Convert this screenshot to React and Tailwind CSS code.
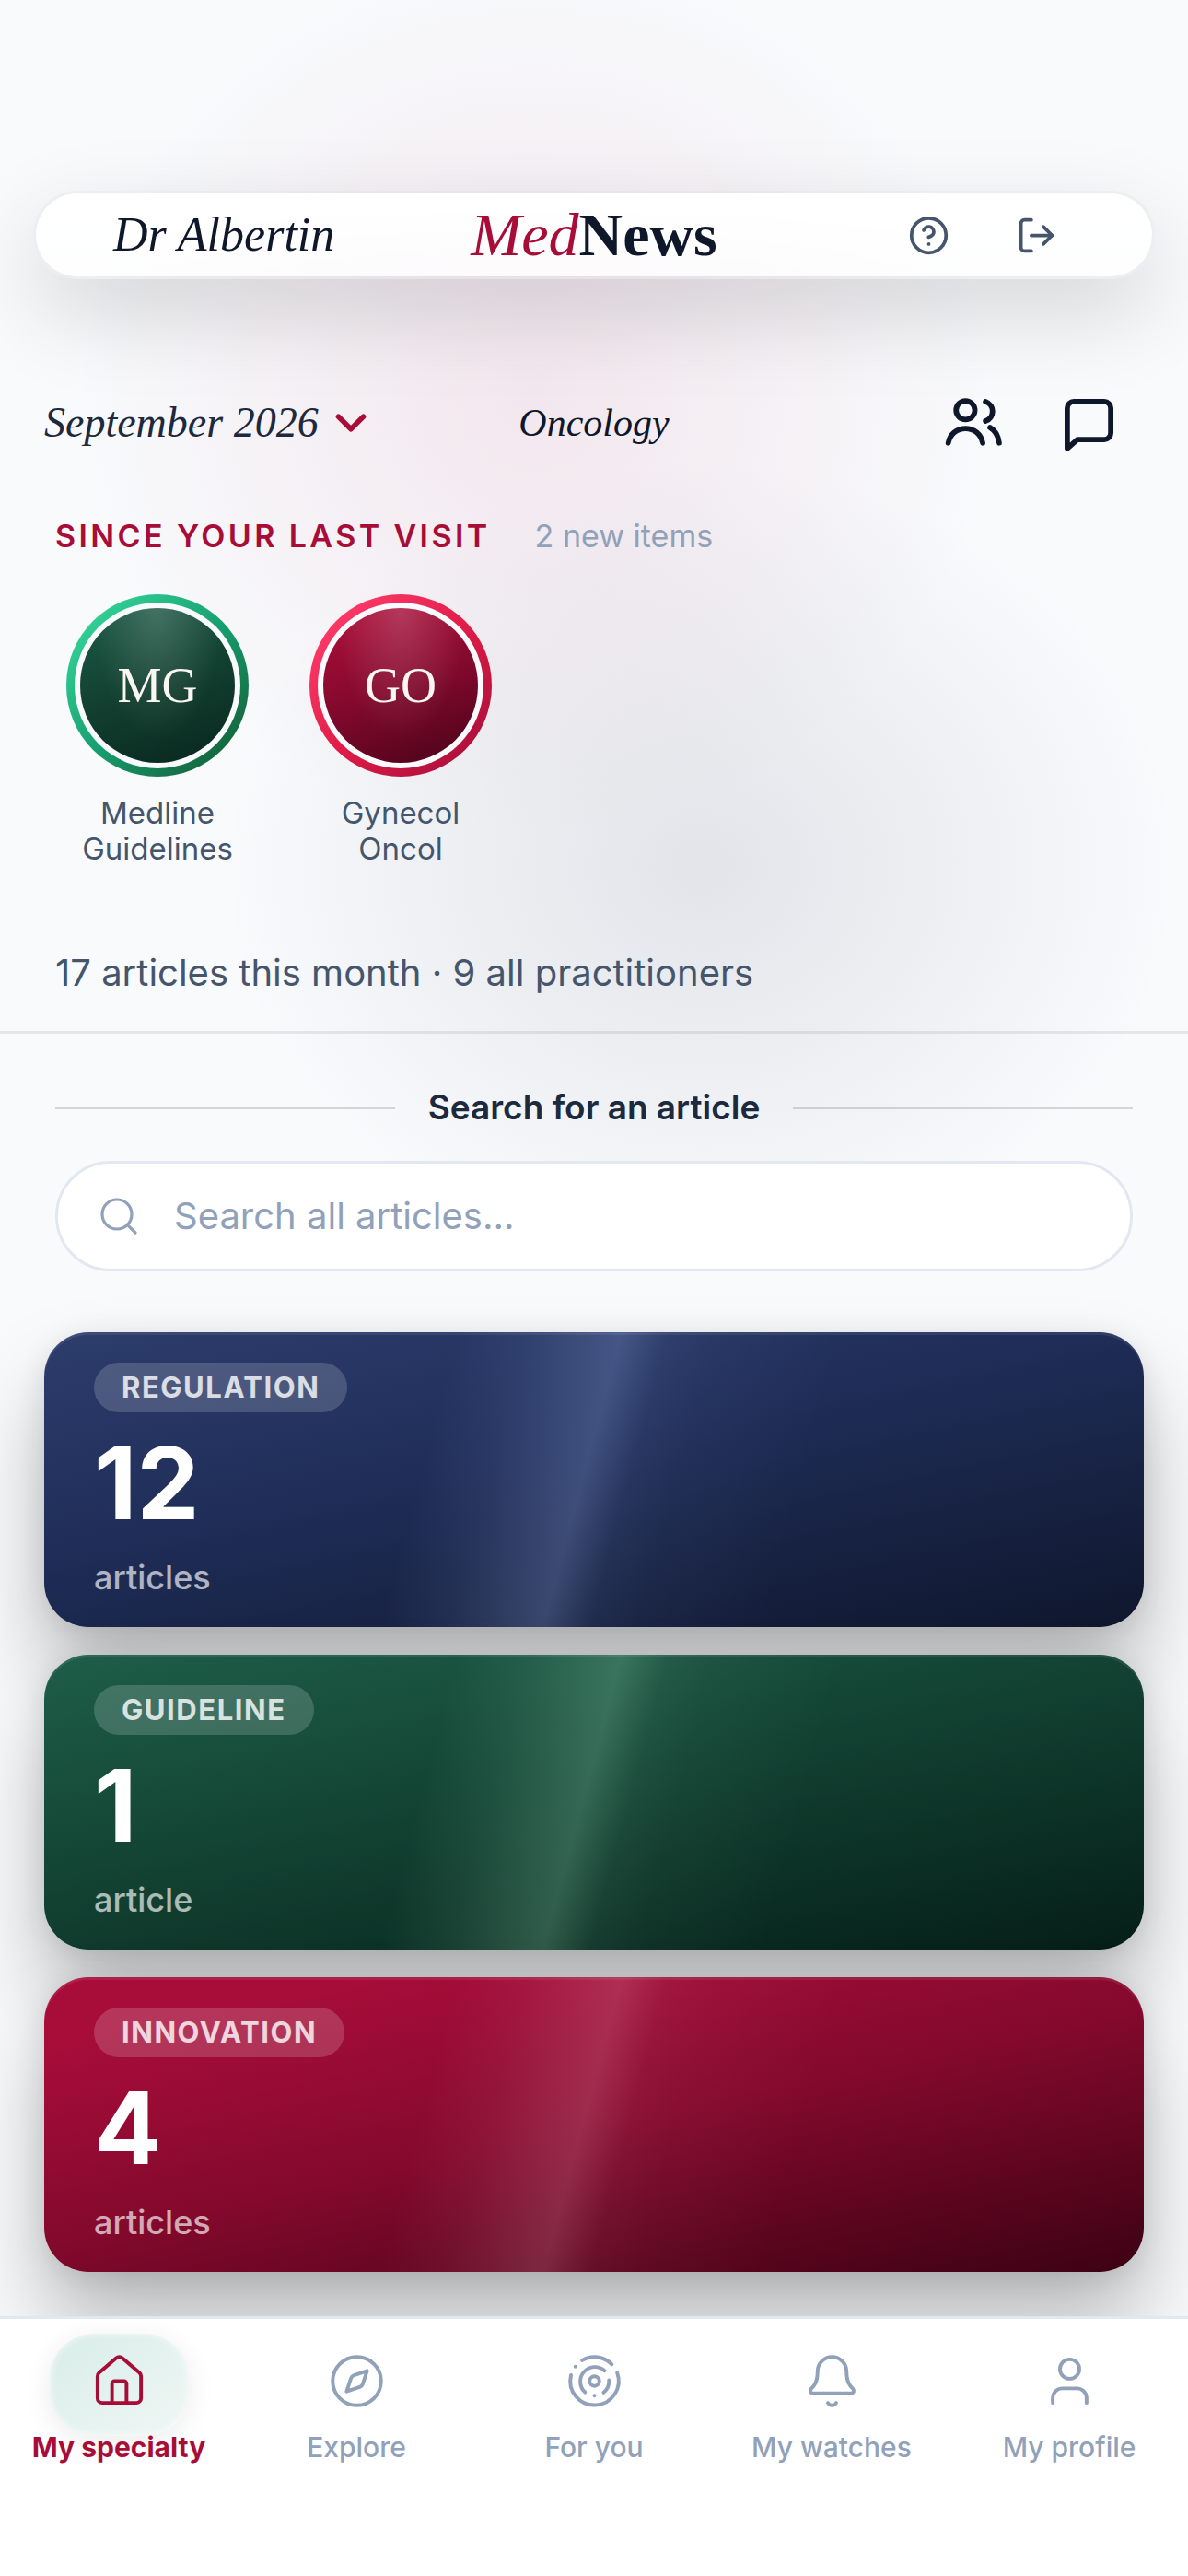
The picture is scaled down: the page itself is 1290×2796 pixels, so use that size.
import React, { useState } from 'react';
import { Bell, ChevronDown, CircleHelp, Compass, House, LogOut, Search, User } from 'lucide-react';

const RadarIcon = ({ className }) => (
  <svg className={className} viewBox="0 0 24 24" fill="none" stroke="currentColor" strokeWidth="1.5" strokeLinecap="round" aria-hidden="true">
    <circle cx="12" cy="12" r="2" />
    <path d="M8.1 16.6A6 6 0 0 1 16.2 7.7" />
    <path d="M18 11.6A6 6 0 0 1 15.8 16.7" />
    <path d="M2.3 9.5A10 10 0 1 0 21.4 8.5" />
    <path d="M6.9 3.4A10 10 0 0 1 19.2 5.1" />
    <path d="M4.1 6h.01M12 18h.01" />
  </svg>
);

const PeopleIcon = ({ className }) => (
  <svg className={className} viewBox="0 0 24 24" fill="none" stroke="currentColor" strokeWidth="2.1" strokeLinecap="round" strokeLinejoin="round" aria-hidden="true">
    <circle cx="8.5" cy="7" r="3.7" />
    <path d="M1.7 19.9c.7-3.500 3.400-5.700 6.800-5.700s6.100 2.200 6.800 5.700" />
    <path d="M16.4 3.600c3.700 1.300 3.700 6.400 0 7.700" />
    <path d="M18.2 13.800c2 1.200 3.300 3.400 3.600 6.100" />
  </svg>
);

const MessageIcon = ({ className }) => (
  <svg className={className} viewBox="0 0 24 24" fill="none" stroke="currentColor" strokeWidth="2.2" strokeLinecap="round" strokeLinejoin="round" aria-hidden="true">
    <path d="M3 5.7A2.7 2.7 0 0 1 5.7 3h12.6A2.7 2.7 0 0 1 21 5.7v10.3a2.7 2.7 0 0 1-2.7 2.7H7.2L3 22.4z" />
  </svg>
);

const stories = [
  {
    initials: 'MG',
    lines: ['Medline', 'Guidelines'],
    ring: 'bg-[linear-gradient(135deg,#34d399_10%,#17a070_50%,#14532d_100%)]',
    disc: 'bg-[linear-gradient(160deg,#1a5542_10%,#123f30_50%,#08261d_100%)]',
  },
  {
    initials: 'GO',
    lines: ['Gynecol', 'Oncol'],
    ring: 'bg-[linear-gradient(135deg,#ff3b6b_10%,#e11d48_50%,#9f0c37_100%)]',
    disc: 'bg-[linear-gradient(160deg,#a80d38_10%,#83092d_50%,#4a0319_100%)]',
  },
];

const categories = [
  {
    label: 'Regulation',
    count: 12,
    surface: 'bg-[linear-gradient(168deg,#2d3d6c_0%,#1f2d58_42%,#0f172d_100%)]',
    sheen:
      'bg-[linear-gradient(105deg,transparent_35%,rgba(170,195,255,0.08)_41%,rgba(170,195,255,0.24)_49%,rgba(170,195,255,0.08)_53%,rgba(170,195,255,0.04)_57%,transparent_68%)]',
  },
  {
    label: 'Guideline',
    count: 1,
    surface: 'bg-[linear-gradient(168deg,#1e5e49_0%,#134434_42%,#051e17_100%)]',
    sheen:
      'bg-[linear-gradient(105deg,transparent_35%,rgba(170,240,205,0.08)_41%,rgba(170,240,205,0.23)_49%,rgba(170,240,205,0.08)_53%,rgba(170,240,205,0.04)_57%,transparent_68%)]',
  },
  {
    label: 'Innovation',
    count: 4,
    surface: 'bg-[linear-gradient(168deg,#a80d3a_12%,#84092d_50%,#3c0213_100%)]',
    sheen:
      'bg-[linear-gradient(105deg,transparent_35%,rgba(255,190,210,0.06)_41%,rgba(255,190,210,0.19)_49%,rgba(255,190,210,0.06)_53%,rgba(255,190,210,0.03)_57%,transparent_68%)]',
  },
];

const tabs = [
  { label: 'My specialty', icon: House },
  { label: 'Explore', icon: Compass },
  { label: 'For you', icon: RadarIcon },
  { label: 'My watches', icon: Bell },
  { label: 'My profile', icon: User },
];

const Story = ({ story }) => (
  <li>
    <button type="button" className="flex w-[222px] flex-col items-center">
      <span className={`size-[198px] rounded-full p-[9px] ${story.ring}`}>
        <span className="block size-full rounded-full bg-[#f8fafc] p-[6px]">
          <span className={`block size-full overflow-hidden rounded-full ${story.disc}`}>
            <span className="flex size-full items-center justify-center bg-[radial-gradient(ellipse_at_50%_0%,rgba(255,255,255,0.18),transparent_60%)] font-['Liberation_Serif',serif] text-[54px] text-[#faf7f2]">
              {story.initials}
            </span>
          </span>
        </span>
      </span>
      <span className="mt-5 text-center text-[33px] leading-[39px] text-slate-600">
        {story.lines[0]}
        <br />
        {story.lines[1]}
      </span>
    </button>
  </li>
);

const CategoryCard = ({ category }) => (
  <button
    type="button"
    className={`w-full overflow-hidden rounded-[48px] text-left shadow-[0_60px_96px_rgba(0,0,0,0.26),0_6px_30px_rgba(0,0,0,0.1)] ${category.surface}`}
  >
    <span className={`flex flex-col items-start rounded-[48px] px-[54px] pt-[33px] pb-[30px] shadow-[inset_0_3px_0_rgba(255,255,255,0.08)] ${category.sheen}`}>
      <span className="flex h-[54px] items-center rounded-full bg-white/17 px-[30px] text-[31px] font-bold tracking-wider text-white/80 uppercase">
        {category.label}
      </span>
      <span className="mt-[26px] text-[108px] leading-[102px] font-bold text-white">{category.count}</span>
      <span className="mt-[27px] text-[36px] leading-[48px] font-medium text-white/65">
        {category.count === 1 ? 'article' : 'articles'}
      </span>
    </span>
  </button>
);

export default function App() {
  const [activeTab, setActiveTab] = useState('My specialty');
  const [query, setQuery] = useState('');

  return (
    <div className="flex min-h-screen flex-col bg-[#f8fafc] bg-[radial-gradient(ellipse_500px_480px_at_45%_430px,rgba(190,60,110,0.10),rgba(190,60,110,0.05)_50%,transparent),radial-gradient(ellipse_520px_440px_at_59%_940px,rgba(25,35,65,0.10),rgba(25,35,65,0.05)_50%,transparent)] bg-no-repeat font-[Inter,sans-serif]">
      <header className="mx-9 mt-[207px] grid h-24 grid-cols-[1fr_auto_1fr] items-center rounded-full border-[3px] border-slate-900/5 bg-linear-to-b from-white to-white/75 bg-clip-padding px-[84px] font-['Liberation_Serif',serif] text-slate-900 shadow-[0_36px_96px_rgba(0,0,0,0.15)]">
        <span className="text-[52px] leading-[72px] italic">Dr Albertin</span>
        <h1 className="text-[66px] leading-[72px] font-bold">
          <span className="font-normal text-[#a80d38] italic">Med</span>News
        </h1>
        <div className="flex justify-end gap-[33px] text-slate-600">
          <button type="button" aria-label="Help" className="flex size-[84px] items-center justify-center">
            <CircleHelp className="size-[45px]" strokeWidth={2} />
          </button>
          <button type="button" aria-label="Log out" className="flex size-[84px] items-center justify-center">
            <LogOut className="size-[45px]" strokeWidth={2} />
          </button>
        </div>
      </header>

      <main className="flex-1">
        <div className="mt-[123px] grid grid-cols-[1fr_auto_1fr] items-center px-12">
          <button type="button" className="flex items-center gap-2 font-['Liberation_Serif',serif] text-[46px] leading-[66px] text-slate-800 italic">
            September 2026
            <ChevronDown className="size-[54px] text-[#a80d38]" strokeWidth={2.5} />
          </button>
          <h2 className="font-['Liberation_Serif',serif] text-[42px] leading-[66px] text-slate-900 italic">Oncology</h2>
          <div className="flex items-center justify-end gap-[60px] pr-7 text-slate-900">
            <button type="button" aria-label="Colleagues">
              <PeopleIcon className="size-[66px]" />
            </button>
            <button type="button" aria-label="Messages">
              <MessageIcon className="size-[63px]" />
            </button>
          </div>
        </div>

        <section className="mt-[66px] px-[60px]">
          <div className="flex items-center gap-12 text-[34px] leading-[48px]">
            <h3 className="font-semibold tracking-widest text-[#a80d38] uppercase">Since your last visit</h3>
            <span className="text-slate-400">2 new items</span>
          </div>
          <ul className="mt-[39px] flex gap-[42px]">
            {stories.map((story) => (
              <Story key={story.initials} story={story} />
            ))}
          </ul>
        </section>

        <p className="mt-[88px] border-b-[3px] border-black/8 px-[60px] pb-9 text-[40px] leading-[54px] text-slate-600">
          17 articles this month · 9 all practitioners
        </p>

        <section className="mt-14 px-[60px]">
          <div className="flex items-center gap-9">
            <span className="h-[3px] flex-1 bg-black/14" />
            <label htmlFor="article-search" className="text-[37px] leading-[48px] font-semibold text-slate-800">
              Search for an article
            </label>
            <span className="h-[3px] flex-1 bg-black/14" />
          </div>
          <div className="mt-[34px] flex h-[120px] items-center gap-9 rounded-full border-[3px] border-slate-200 bg-white px-[42px]">
            <Search className="size-12 text-slate-400" strokeWidth={1.6} />
            <input
              id="article-search"
              type="search"
              value={query}
              onChange={(e) => setQuery(e.target.value)}
              placeholder="Search all articles..."
              className="min-w-0 flex-1 bg-transparent text-[40px] text-slate-900 outline-none placeholder:text-slate-400"
            />
          </div>
        </section>

        <section className="mt-[66px] flex flex-col gap-[30px] px-12 pb-12">
          {categories.map((category) => (
            <CategoryCard key={category.label} category={category} />
          ))}
        </section>
      </main>

      <nav className="relative grid grid-cols-5 border-t-[3px] border-slate-200 bg-white pt-9 pb-[122px]">
        {tabs.map(({ label, icon: Icon }) => {
          const active = label === activeTab;
          return (
            <button
              key={label}
              type="button"
              aria-current={active ? 'page' : undefined}
              onClick={() => setActiveTab(label)}
              className={`flex flex-col items-center text-[30px] leading-9 ${active ? 'font-bold text-[#a80d38]' : 'font-medium text-slate-400'}`}
            >
              <span className="relative">
                {active && (
                  <span className="absolute -inset-x-11 -top-5 -bottom-7 rounded-[48px] bg-linear-to-br from-[#d8ede8] to-[#f0f7f5] shadow-[0_6px_30px_rgba(0,0,0,0.08),inset_0_0_9px_rgba(255,255,255,0.8)]" />
                )}
                <Icon className="relative size-[63px]" strokeWidth={1.5} />
              </span>
              <span className="relative mt-[22px]">{label}</span>
            </button>
          );
        })}
      </nav>
    </div>
  );
}
